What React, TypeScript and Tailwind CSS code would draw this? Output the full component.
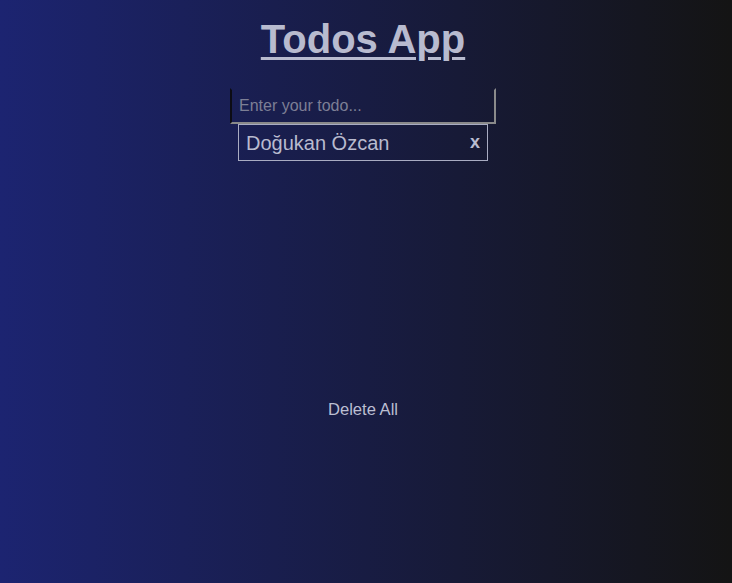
import React from "react";

export default function App() {
  return (
    <div
      className="w-[732px] h-[583px] pr-[6px] flex flex-col items-center bg-[linear-gradient(to_right,#1c2471,#141414)] text-[#b8bbcf]"
      style={{ fontFamily: '"Liberation Sans", Arial, sans-serif' }}
    >
      <h1 className="mt-[16px] text-[40px] leading-[46px] font-bold underline decoration-[3px] underline-offset-[4px]">
        Todos App
      </h1>
      <div className="mt-[26px] flex flex-col items-center">
        <input
          className="w-[266px] h-[36px] px-[7px] bg-transparent text-[16px] text-[#b8bbcf] placeholder:text-[#7d7f95] outline-none border-2 border-t-transparent border-l-[#0c0c14] border-r-[#8a8a8a] border-b-[#8a8a8a]"
          placeholder="Enter your todo..."
        />
        <div className="w-[250px] h-[37px] border border-[#a9acc2] flex items-center justify-between pl-[7px] pr-[7px] text-[20px]">
          <span>Doğukan Özcan</span>
          <span className="font-bold text-[18px]">x</span>
        </div>
      </div>
      <button className="mt-[237px] text-[16.6px] text-[#bcbfd2]">Delete All</button>
    </div>
  );
}
